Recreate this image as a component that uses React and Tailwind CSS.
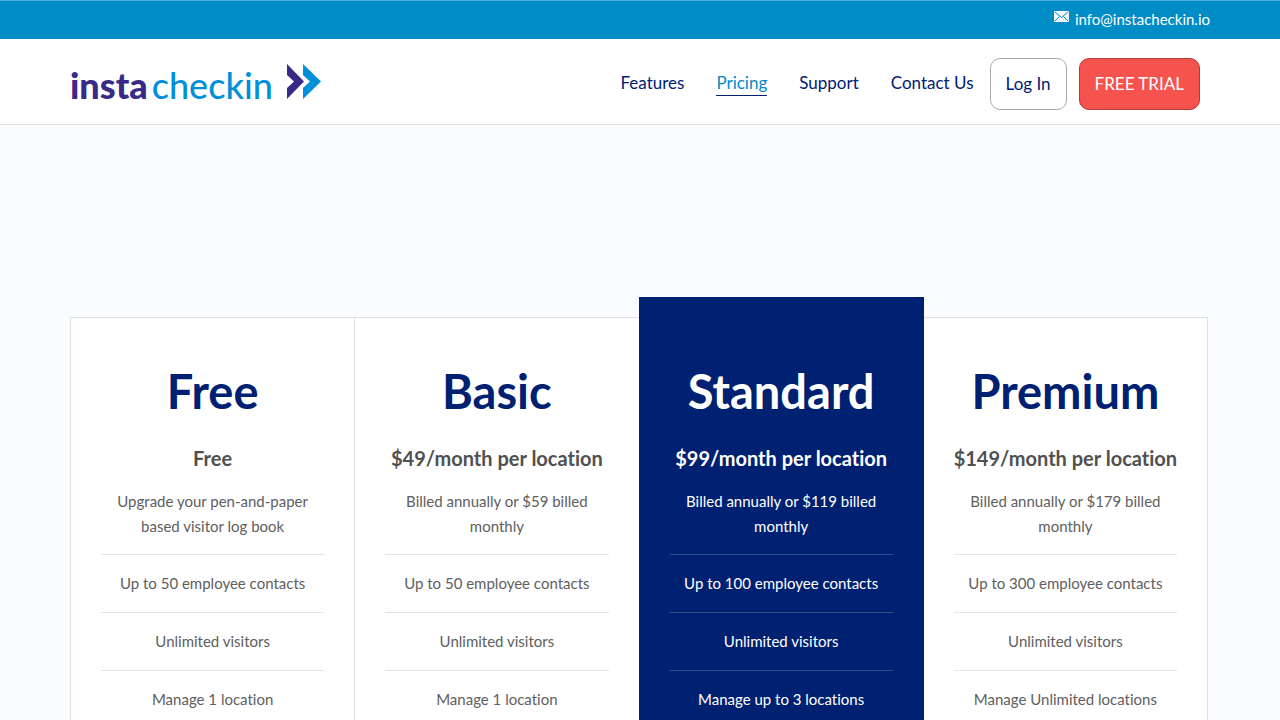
const navLinks = [
  { label: 'Features' },
  { label: 'Pricing', active: true },
  { label: 'Support' },
  { label: 'Contact Us' },
]

const plans = [
  {
    name: 'Free',
    price: 'Free',
    note: 'Upgrade your pen-and-paper based visitor log book',
    features: ['Up to 50 employee contacts', 'Unlimited visitors', 'Manage 1 location'],
  },
  {
    name: 'Basic',
    price: '$49/month per location',
    note: 'Billed annually or $59 billed monthly',
    features: ['Up to 50 employee contacts', 'Unlimited visitors', 'Manage 1 location'],
  },
  {
    name: 'Standard',
    price: '$99/month per location',
    note: 'Billed annually or $119 billed monthly',
    features: ['Up to 100 employee contacts', 'Unlimited visitors', 'Manage up to 3 locations'],
    featured: true,
  },
  {
    name: 'Premium',
    price: '$149/month per location',
    note: 'Billed annually or $179 billed monthly',
    features: ['Up to 300 employee contacts', 'Unlimited visitors', 'Manage Unlimited locations'],
  },
]

function Envelope() {
  return (
    <svg width="15" height="11" viewBox="0 0 15 11" aria-hidden="true">
      <rect width="15" height="11" rx="1" fill="#f2fafd" />
      <path d="M1 1l6.5 5.5L14 1M1 10l4.5-4.5M14 10L9.5 5.5" fill="none" stroke="#008cc5" strokeWidth="1" />
    </svg>
  )
}

function Logo() {
  return (
    <a href="#" className="flex items-baseline whitespace-nowrap text-[36px] leading-10">
      <span className="font-black text-[#3a2a87]">insta</span>
      <span className="ml-1 font-medium text-[#0090d9]">checkin</span>
      <svg className="ml-[14px]" width="34" height="35" viewBox="0 0 34 35" aria-hidden="true">
        <path d="M0 0l17 17.5L0 35V24l7-6.5L0 11z" fill="#3a2a87" />
        <path d="M16 0l18 17.5L16 35V24l7-6.5-7-6.5z" fill="#0090d9" />
      </svg>
    </a>
  )
}

function PlanCard({ plan }) {
  const featured = plan.featured
  const line = featured ? 'border-[#334d8d]' : 'border-[#e4e4e4]'

  return (
    <article
      className={
        featured
          ? 'relative z-10 -mt-5 -ml-px min-w-0 flex-1 bg-[#002072] px-[31px] pt-[66px] pb-10 text-white'
          : '-ml-px min-w-0 flex-1 border border-[#e0e1e3] bg-white px-[30px] pt-[45px] pb-10 text-[#606060] first:ml-0'
      }
    >
      <h2 className={`text-[47px] leading-14 font-bold ${featured ? 'text-white' : 'text-[#002072]'}`}>{plan.name}</h2>
      <h3 className={`-mx-4 mt-6 text-xl leading-[30px] font-bold ${featured ? 'text-white' : 'text-[#505050]'}`}>{plan.price}</h3>
      <p className={`mt-4 border-b pb-[15px] ${line}`}>{plan.note}</p>
      <ul>
        {plan.features.map((feature) => (
          <li key={feature} className={`border-b py-4 ${line}`}>{feature}</li>
        ))}
      </ul>
    </article>
  )
}

export default function App() {
  return (
    <div className="h-screen overflow-hidden bg-[#fbfcff] font-['Lato',sans-serif] text-[15px] leading-[25px] [font-variant-ligatures:none]">
      <div className="border-t border-[#4badd5] bg-[#008cc5] text-white">
        <div className="mx-auto flex h-[38px] max-w-[1140px] items-center justify-end pb-[2px]">
          <a href="mailto:info@instacheckin.io" className="flex items-start gap-[6px]">
            <span className="pt-1"><Envelope /></span>
            info@instacheckin.io
          </a>
        </div>
      </div>

      <header className="border-b border-[#e4e4e4] bg-white">
        <div className="mx-auto flex max-w-[1140px] items-center justify-between pt-[19px] pb-[14px]">
          <Logo />
          <nav className="flex items-center pr-[10px] text-[17px] leading-6 text-[#002072]">
            {navLinks.map((link) => (
              <a key={link.label} href="#" className="px-4 pb-[2px]">
                <span className={link.active ? 'inline-block border-b border-[#002072] text-[#008cc5]' : 'inline-block border-b border-transparent'}>
                  {link.label}
                </span>
              </a>
            ))}
            <a href="#" className="mr-3 rounded-[10px] border border-[#aaaaaa] px-[15px] py-[13px]">Log In</a>
            <a href="#" className="rounded-[10px] border border-[#b03c3c] bg-[#f6534e] px-[15px] py-[13px] text-white">FREE TRIAL</a>
          </nav>
        </div>
      </header>

      <main className="mx-auto mt-48 flex max-w-[1140px] pr-[2px] text-center">
        {plans.map((plan) => (
          <PlanCard key={plan.name} plan={plan} />
        ))}
      </main>
    </div>
  )
}
